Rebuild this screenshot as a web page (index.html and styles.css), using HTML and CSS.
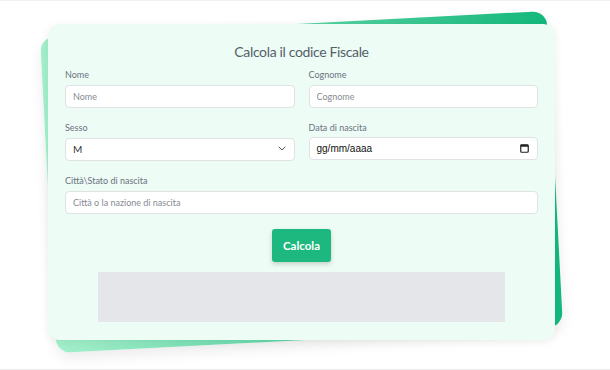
FILE: index.html
```html
<!DOCTYPE html>
<html lang="it">
<head>
    <meta charset="UTF-8">
    <meta name="viewport" content="width=device-width, initial-scale=1">
    <title>Calcola il codice Fiscale</title>
    <link rel="stylesheet" href="styles.css">
</head>
<body>
    <div class="page">
        <div class="card-wrap">
            <form class="card">
                <h1 class="title">Calcola il codice Fiscale</h1>

                <div class="grid">
                    <div class="field">
                        <label for="nome">Nome</label>
                        <input type="text" id="nome" placeholder="Nome">
                    </div>
                    <div class="field">
                        <label for="cognome">Cognome</label>
                        <input type="text" id="cognome" placeholder="Cognome">
                    </div>

                    <div class="field">
                        <label for="sesso">Sesso</label>
                        <div class="select-wrap">
                            <select id="sesso">
                                <option>M</option>
                                <option>F</option>
                            </select>
                            <svg class="chevron" width="8" height="5" viewBox="0 0 8 5">
                                <path d="M1 1l3 3 3-3" fill="none" stroke="#555" stroke-width="1" stroke-linecap="round"/>
                            </svg>
                        </div>
                    </div>
                    <div class="field">
                        <label>Data di nascita</label>
                        <div class="date-input">
                            <span>gg/mm/aaaa</span>
                            <svg width="9" height="9" viewBox="0 0 9 9">
                                <rect x="0.75" y="0.75" width="7.5" height="7.5" rx="1" fill="none" stroke="#222" stroke-width="1.2"/>
                                <rect x="0.75" y="0.75" width="7.5" height="2" fill="#222"/>
                            </svg>
                        </div>
                    </div>

                    <div class="field full">
                        <label for="citta">Città\Stato di nascita</label>
                        <input type="text" id="citta" placeholder="Città o la nazione di nascita">
                    </div>
                </div>

                <div class="actions">
                    <button type="button" class="btn">Calcola</button>
                </div>

                <div class="result"></div>
            </form>
        </div>
    </div>
</body>
</html>
```

FILE: styles.css
```css
* {
    margin: 0;
    padding: 0;
    box-sizing: border-box;
}
html, body {
    height: 100%;
    overflow: hidden;
}
body {
    font-family: Lato, "Open Sans", sans-serif;
    background: #fff;
}
.page {
    height: 370px;
    border-top: 1px solid #f1f1f1;
    border-bottom: 1px solid #ececec;
    padding-top: 23px;
}
.card-wrap {
    position: relative;
    width: 507px;
    margin-left: 48px;
}
.card-wrap::before {
    content: "";
    position: absolute;
    inset: 0;
    background: linear-gradient(to right, #a3efcb, #14b87c);
    border-radius: 14px;
    transform: rotate(-3deg);
    box-shadow: 0 6px 14px rgba(0, 0, 0, 0.08);
}
.card {
    position: relative;
    height: 316px;
    padding: 17px 17px 0;
    background: #edfcf5;
    border-radius: 12px;
    box-shadow: 0 2px 10px rgba(0, 0, 0, 0.06);
}
.title {
    font-size: 14px;
    font-weight: 400;
    line-height: 21px;
    text-align: center;
    color: #55606a;
    letter-spacing: -0.35px;
}
.grid {
    display: grid;
    grid-template-columns: 1fr 1fr;
    column-gap: 14px;
    row-gap: 13px;
    margin-top: 6px;
}
.field.full {
    grid-column: 1 / 3;
}
.field label {
    display: block;
    font-size: 9px;
    line-height: 14px;
    color: #6b7280;
    margin-bottom: 2px;
}
input, select, .date-input {
    width: 100%;
    height: 23px;
    padding: 0 7px;
    font-family: inherit;
    font-size: 9px;
    color: #222;
    background: #fff;
    border: 1px solid #dfe3e6;
    border-radius: 4px;
    outline: none;
}
input::placeholder {
    color: #858b92;
}
.select-wrap {
    position: relative;
}
select {
    appearance: none;
    font-size: 10px;
    color: #333;
}
.chevron {
    position: absolute;
    right: 9px;
    top: 9px;
}
.date-input {
    display: flex;
    align-items: center;
    justify-content: space-between;
    padding-right: 8px;
    font-family: "Liberation Sans", Arial, sans-serif;
    font-size: 10px;
    color: #111;
}
.actions {
    display: flex;
    justify-content: center;
    margin-top: 15px;
}
.btn {
    width: 59px;
    height: 33px;
    font-family: inherit;
    font-size: 11.5px;
    font-weight: 700;
    color: #fff;
    background: #1db87f;
    border: none;
    border-radius: 3px;
    box-shadow: 0 2px 5px rgba(0, 0, 0, 0.18);
}
.result {
    width: 407px;
    height: 50px;
    margin: 10px auto 0;
    background: #e4e6ea;
}
```
